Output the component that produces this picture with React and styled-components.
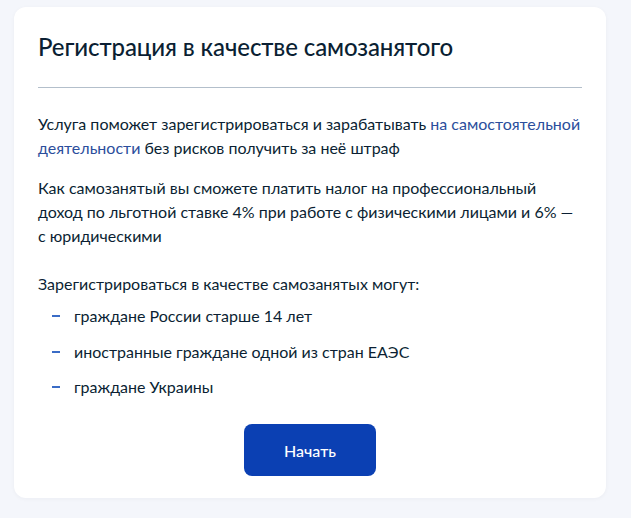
import React from 'react';
import styled, { createGlobalStyle } from 'styled-components';

const GlobalStyle = createGlobalStyle`
  html, body {
    margin: 0;
    padding: 0;
    background: #f4f6fb;
  }
  body {
    font-family: Lato, "Noto Sans", sans-serif;
    color: #0b1f33;
  }
`;

const Page = styled.div`
  padding: 7px 25px 20px 14px;
`;

const Card = styled.section`
  background: #fff;
  border-radius: 12px;
  padding: 24px 24px 22px;
  box-shadow: 0 1px 4px rgba(11, 31, 51, 0.04);
`;

const Title = styled.h1`
  margin: 0;
  font-size: 24px;
  line-height: 32px;
  font-weight: 500;
  color: #0b1f33;
  letter-spacing: -0.1px;
`;

const Divider = styled.hr`
  margin: 24px 0;
  border: 0;
  border-top: 1px solid #b3bfcb;
`;

const Text = styled.p`
  margin: 0 0 ${p => p.gap ?? 16}px;
  font-size: 16px;
  line-height: 24px;
  color: #0b1f33;
`;

const Link = styled.a`
  color: #2b4e9c;
  text-decoration: none;
  cursor: pointer;
`;

const List = styled.ul`
  list-style: none;
  margin: 8px 0 0;
  padding: 0 0 0 14px;
  display: flex;
  flex-direction: column;
  gap: 11.5px;
`;

const Item = styled.li`
  display: flex;
  align-items: center;
  font-size: 16px;
  line-height: 24px;

  &::before {
    content: '';
    width: 8px;
    height: 2px;
    background: #3a6cc6;
    margin-right: 14px;
    flex-shrink: 0;
  }
`;

const Actions = styled.div`
  display: flex;
  justify-content: center;
  margin-top: 25px;
`;

const Button = styled.button`
  width: 132px;
  height: 52px;
  border: 0;
  border-radius: 8px;
  background: #0b40b3;
  color: #fff;
  font-family: Lato, "Noto Sans", sans-serif;
  font-size: 16px;
  font-weight: 500;
  cursor: pointer;
`;

const items = [
  'граждане России старше 14 лет',
  'иностранные граждане одной из стран ЕАЭС',
  'граждане Украины',
];

export default function App() {
  return (
    <>
      <GlobalStyle />
      <Page>
        <Card>
          <Title>Регистрация в качестве самозанятого</Title>
          <Divider />
          <Text>
            Услуга поможет зарегистрироваться и зарабатывать{' '}
            <Link>на самостоятельной деятельности</Link> без рисков получить за неё штраф
          </Text>
          <Text gap={24}>
            Как самозанятый вы сможете платить налог на профессиональный доход по льготной
            ставке 4% при работе с физическими лицами и 6% — с юридическими
          </Text>
          <Text gap={0}>Зарегистрироваться в качестве самозанятых могут:</Text>
          <List>
            {items.map(item => (
              <Item key={item}>{item}</Item>
            ))}
          </List>
          <Actions>
            <Button>Начать</Button>
          </Actions>
        </Card>
      </Page>
    </>
  );
}
